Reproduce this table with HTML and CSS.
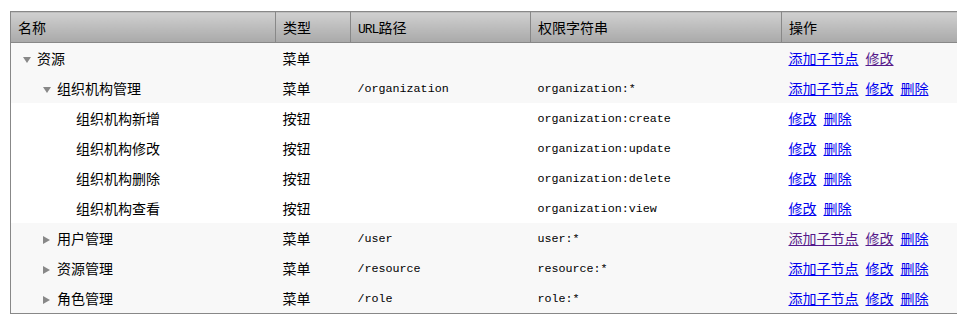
FILE: index.html
```html
<!DOCTYPE html>
<html>
<head>
    <title>资源管理</title>
    <meta charset="utf-8">
    <link rel="stylesheet" href="styles.css">
</head>
<body>
    <table class="tree-table">
        <colgroup>
            <col class="c-name">
            <col class="c-type">
            <col class="c-url">
            <col class="c-perm">
            <col class="c-op">
        </colgroup>
        <thead>
            <tr>
                <th>名称</th>
                <th>类型</th>
                <th><span class="head-code">URL</span>路径</th>
                <th>权限字符串</th>
                <th>操作</th>
            </tr>
        </thead>
        <tbody>
            <tr class="menu">
                <td class="lv0"><span class="arrow down"></span>资源</td>
                <td>菜单</td>
                <td class="code"></td>
                <td class="code"></td>
                <td class="ops"><a href="#">添加子节点</a><a href="#" class="visited">修改</a></td>
            </tr>
            <tr class="menu">
                <td class="lv1"><span class="arrow down"></span>组织机构管理</td>
                <td>菜单</td>
                <td class="code">/organization</td>
                <td class="code">organization:*</td>
                <td class="ops"><a href="#">添加子节点</a><a href="#">修改</a><a href="#">删除</a></td>
            </tr>
            <tr>
                <td class="lv2"><span class="arrow"></span>组织机构新增</td>
                <td>按钮</td>
                <td class="code"></td>
                <td class="code">organization:create</td>
                <td class="ops"><a href="#">修改</a><a href="#">删除</a></td>
            </tr>
            <tr>
                <td class="lv2"><span class="arrow"></span>组织机构修改</td>
                <td>按钮</td>
                <td class="code"></td>
                <td class="code">organization:update</td>
                <td class="ops"><a href="#">修改</a><a href="#">删除</a></td>
            </tr>
            <tr>
                <td class="lv2"><span class="arrow"></span>组织机构删除</td>
                <td>按钮</td>
                <td class="code"></td>
                <td class="code">organization:delete</td>
                <td class="ops"><a href="#">修改</a><a href="#">删除</a></td>
            </tr>
            <tr>
                <td class="lv2"><span class="arrow"></span>组织机构查看</td>
                <td>按钮</td>
                <td class="code"></td>
                <td class="code">organization:view</td>
                <td class="ops"><a href="#">修改</a><a href="#">删除</a></td>
            </tr>
            <tr class="menu">
                <td class="lv1"><span class="arrow right"></span>用户管理</td>
                <td>菜单</td>
                <td class="code">/user</td>
                <td class="code">user:*</td>
                <td class="ops"><a href="#" class="visited">添加子节点</a><a href="#" class="visited">修改</a><a href="#">删除</a></td>
            </tr>
            <tr class="menu">
                <td class="lv1"><span class="arrow right"></span>资源管理</td>
                <td>菜单</td>
                <td class="code">/resource</td>
                <td class="code">resource:*</td>
                <td class="ops"><a href="#">添加子节点</a><a href="#">修改</a><a href="#">删除</a></td>
            </tr>
            <tr class="menu">
                <td class="lv1"><span class="arrow right"></span>角色管理</td>
                <td>菜单</td>
                <td class="code">/role</td>
                <td class="code">role:*</td>
                <td class="ops"><a href="#">添加子节点</a><a href="#">修改</a><a href="#">删除</a></td>
            </tr>
        </tbody>
    </table>
</body>
</html>
```

FILE: styles.css
```css
html {
    font-family: "Noto Sans CJK SC", sans-serif;
    font-size: 14px;
}
body {
    margin: 11px 0 0 10px;
    overflow: hidden;
    color: #000;
}

.tree-table {
    width: 947px;
    border-collapse: collapse;
    table-layout: fixed;
    border-left: 1px solid #888;
    border-bottom: 1px solid #888;
}
.c-name { width: 265px; }
.c-type { width: 75px; }
.c-url { width: 180px; }
.c-perm { width: 251px; }
.c-op { width: 176px; }

.tree-table th {
    height: 30px;
    padding: 0 7px;
    text-align: left;
    font-weight: normal;
    background: linear-gradient(#d0d0d0, #a9a9a9);
    border: 1px solid #888;
    border-right: none;
}
.tree-table th + th {
    border-left: 1px solid #888;
}
.tree-table td {
    height: 30px;
    padding: 0 7px;
    white-space: nowrap;
    background: #fff;
}
.tree-table td.code {
    padding-top: 2px;
    height: 28px;
}
.tree-table tr.menu td {
    background: #f8f8f8;
}

.code {
    font-family: "Liberation Mono", monospace;
    font-size: 11.7px;
}
.head-code {
    font-family: "Liberation Mono", monospace;
    font-size: 13px;
    letter-spacing: -1px;
}

.lv0 { padding-left: 12px !important; }
.lv1 { padding-left: 32px !important; }
.lv2 { padding-left: 51px !important; }

.arrow {
    display: inline-block;
    width: 8px;
    height: 7px;
    margin-right: 6px;
    vertical-align: middle;
}
.arrow.down {
    width: 0;
    height: 0;
    border-style: solid;
    border-color: #888 transparent transparent;
    border-width: 6px 4px 0;
    margin-right: 6px;
}
.arrow.right {
    width: 0;
    height: 0;
    border-style: solid;
    border-color: transparent transparent transparent #888;
    border-width: 4px 0 4px 7px;
    margin-right: 7px;
}

.ops a {
    color: #00e;
    margin-right: 7px;
}
.ops a.visited {
    color: #551a8b;
}
```
